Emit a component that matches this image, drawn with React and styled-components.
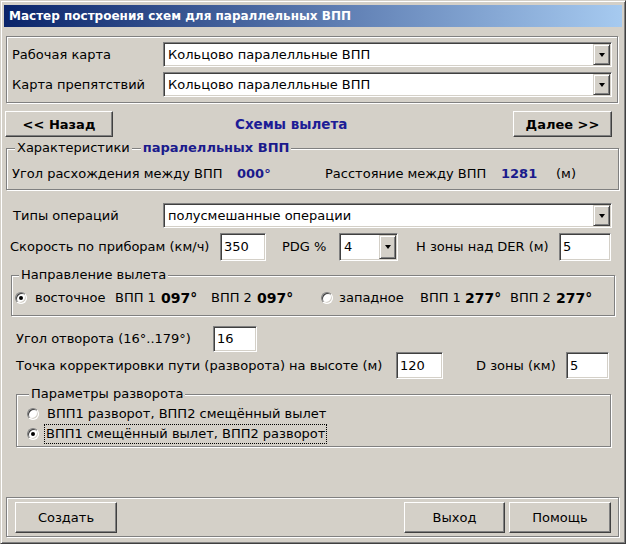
import React from 'react';
import styled, { createGlobalStyle, css } from 'styled-components';

const GlobalStyle = createGlobalStyle`
  html, body { margin: 0; padding: 0; background: #d4d0c8; }
  body { font-family: "DejaVu Sans", Verdana, sans-serif; font-size: 13px; color: #000; }
  * { box-sizing: border-box; }
`;

const Window = styled.div`
  width: 626px;
  height: 544px;
  display: flex;
  flex-direction: column;
  background: #d4d0c8;
  border: 1px solid;
  border-color: #d4d0c8 #404040 #404040 #d4d0c8;
  box-shadow: inset 1px 1px 0 #fff, inset -1px -1px 0 #808080;
  padding: 4px 3px 2px 3px;
`;

const TitleBar = styled.div`
  height: 22px;
  flex: none;
  display: flex;
  align-items: center;
  padding-left: 5px;
  background: linear-gradient(to right, #0a246a, #a6caf0);
  color: #fff;
  font-weight: bold;
  font-size: 12px;
  white-space: nowrap;
`;

const Body = styled.div`
  flex: 1;
  display: flex;
  flex-direction: column;
  padding: 0 3px 4px 2px;
`;

const Group = styled.div`
  position: relative;
  flex: none;
  border: 1px solid #808080;
  box-shadow: inset 1px 1px 0 #fff, 1px 1px 0 #fff;
  margin: ${p => p.$m || '0'};
  padding: ${p => p.$p || '0'};
  display: flex;
  flex-direction: column;
  gap: ${p => p.$gap || 0}px;
`;

const Legend = styled.div`
  position: absolute;
  top: -9px;
  left: ${p => p.$left}px;
  display: flex;
  gap: 9px;
  line-height: 16px;
  white-space: nowrap;
`;

const LegendText = styled.span`
  background: #d4d0c8;
  padding: 0 2px;
  ${p => p.$accent && css`
    font-weight: bold;
    color: #1a1a8c;
  `}
`;

const Row = styled.div`
  display: flex;
  align-items: center;
  flex: none;
  height: ${p => p.$h || 16}px;
  margin-top: ${p => p.$mt || 0}px;
  padding-left: ${p => p.$pl || 0}px;
  padding-right: ${p => p.$pr || 0}px;
  line-height: 16px;
  white-space: nowrap;
`;

const Cell = styled.span`
  flex: none;
  min-width: ${p => (p.$w ? `${p.$w}px` : '0')};
  padding-left: ${p => p.$pl || 0}px;
  white-space: nowrap;
  ${p => p.$bold && css`font-weight: bold;`}
  ${p => p.$blue && css`color: #1a1a8c;`}
  ${p => p.$size && css`font-size: ${p.$size}px;`}
`;

const Sunken = css`
  background: #fff;
  border: 1px solid;
  border-color: #808080 #fff #fff #808080;
  box-shadow: inset 1px 1px 0 #404040, inset -1px -1px 0 #d4d0c8;
`;

const ComboBox = styled.div`
  ${Sunken};
  display: flex;
  align-items: stretch;
  flex: ${p => (p.$w ? 'none' : '1')};
  width: ${p => (p.$w ? `${p.$w}px` : 'auto')};
  height: ${p => p.$h || 25}px;
  padding: 1px;
`;

const ComboText = styled.span`
  flex: 1;
  display: flex;
  align-items: center;
  padding-left: 3px;
  overflow: hidden;
  white-space: nowrap;
`;

const DropButton = styled.span`
  flex: none;
  width: 17px;
  background: #d4d0c8;
  border: 1px solid;
  border-color: #d4d0c8 #404040 #404040 #d4d0c8;
  box-shadow: inset 1px 1px 0 #fff, inset -1px -1px 0 #808080;
  display: flex;
  align-items: center;
  justify-content: center;
  &::after {
    content: '';
    border-left: 3.5px solid transparent;
    border-right: 3.5px solid transparent;
    border-top: 4px solid #000;
  }
`;

const TextBox = styled.span`
  ${Sunken};
  flex: none;
  display: flex;
  align-items: center;
  width: ${p => p.$w}px;
  height: ${p => p.$h || 28}px;
  padding-left: 3px;
`;

const RadioDot = styled.span`
  position: relative;
  flex: none;
  width: 12px;
  height: 12px;
  border-radius: 50%;
  background: #fff;
  border: 1px solid;
  border-color: #808080 #fff #fff #808080;
  box-shadow: inset 1px 1px 0 #404040, inset -1px -1px 0 #d4d0c8;
  ${p => p.$checked && css`
    &::after {
      content: '';
      position: absolute;
      left: 3px;
      top: 3px;
      width: 4px;
      height: 4px;
      border-radius: 50%;
      background: #000;
    }
  `}
`;

const RadioOption = styled.span`
  flex: none;
  display: flex;
  align-items: center;
  gap: ${p => p.$gap || 8}px;
  width: ${p => (p.$w ? `${p.$w}px` : 'auto')};
`;

const RadioLabel = styled.span`
  padding: 0 1px;
  line-height: 18px;
  ${p => p.$focus && css`outline: 1px dotted #000; outline-offset: 0;`}
`;

const Button = styled.button`
  flex: none;
  width: ${p => p.$w}px;
  height: ${p => p.$h}px;
  margin-left: ${p => p.$ml || '0'};
  padding: 0;
  font: inherit;
  font-weight: ${p => (p.$bold ? 'bold' : 'normal')};
  color: #000;
  background: #d4d0c8;
  border: 1px solid;
  border-color: #fff #404040 #404040 #fff;
  box-shadow: inset -1px -1px 0 #808080, inset 1px 1px 0 #d4d0c8;
`;

const NavRow = styled.div`
  display: flex;
  align-items: center;
  height: 26px;
  margin: 8px 0 0 -1px;
  padding-right: 7px;
`;

const Heading = styled.span`
  margin-left: 122px;
  font-weight: bold;
  font-size: 13.5px;
  color: #1c1c96;
`;

const BottomPanel = styled.div`
  margin-top: auto;
  display: flex;
  gap: 4px;
  border: 1px solid #808080;
  box-shadow: inset 1px 1px 0 #fff, 1px 1px 0 #fff;
  padding: 4px 7px 3px 8px;
`;

const Combo = ({ children, w, h }) => (
  <ComboBox $w={w} $h={h}>
    <ComboText>{children}</ComboText>
    <DropButton />
  </ComboBox>
);

export default function App() {
  return (
    <>
      <GlobalStyle />
      <Window>
        <TitleBar>Мастер построения схем для параллельных ВПП</TitleBar>
        <Body>
          <Group $m="9px 1px 0 0" $p="5px" $gap={5}>
            <Row $h={25}>
              <Cell $w={151}>Рабочая карта</Cell>
              <Combo>Кольцово паралелльные ВПП</Combo>
            </Row>
            <Row $h={25}>
              <Cell $w={151}>Карта препятствий</Cell>
              <Combo>Кольцово паралелльные ВПП</Combo>
            </Row>
          </Group>

          <NavRow>
            <Button $w={108} $h={26} $bold>&lt;&lt; Назад</Button>
            <Heading>Схемы вылета</Heading>
            <Button $w={99} $h={26} $bold $ml="auto">Далее &gt;&gt;</Button>
          </NavRow>

          <Group $m="11px 0 0 0" $p="17px 5px 7px 5px">
            <Legend $left={8}>
              <LegendText>Характеристики</LegendText>
              <LegendText $accent>паралелльных ВПП</LegendText>
            </Legend>
            <Row>
              <Cell $w={225}>Угол расхождения между ВПП</Cell>
              <Cell $w={88} $bold $blue>000°</Cell>
              <Cell $w={176}>Расстояние между ВПП</Cell>
              <Cell $w={55} $bold $blue>1281</Cell>
              <Cell>(м)</Cell>
            </Row>
          </Group>

          <Row $h={25} $mt={13} $pl={7} $pr={7}>
            <Cell $w={150}>Типы операций</Cell>
            <Combo>полусмешанные операции</Combo>
          </Row>

          <Row $h={28} $mt={5} $pl={4}>
            <Cell $w={210}>Скорость по приборам (км/ч)</Cell>
            <TextBox $w={46}>350</TextBox>
            <Cell $w={73} $pl={16}>PDG %</Cell>
            <Combo w={59} h={28}>4</Combo>
            <Cell $w={161} $pl={18}>H зоны над DER (м)</Cell>
            <TextBox $w={52}>5</TextBox>
          </Row>

          <Group $m="14px 4px 0 5px" $p="14px 3px 9px 3px">
            <Legend $left={7}>
              <LegendText>Направление вылета</LegendText>
            </Legend>
            <Row>
              <RadioOption $w={100} $gap={8}>
                <RadioDot $checked />
                <span>восточное</span>
              </RadioOption>
              <Cell $w={46}>ВПП 1</Cell>
              <Cell $w={50} $bold $size={14}>097°</Cell>
              <Cell $w={46}>ВПП 2</Cell>
              <Cell $w={64} $bold $size={14}>097°</Cell>
              <RadioOption $w={99} $gap={6}>
                <RadioDot />
                <span>западное</span>
              </RadioOption>
              <Cell $w={45}>ВПП 1</Cell>
              <Cell $w={45} $bold $size={14}>277°</Cell>
              <Cell $w={46}>ВПП 2</Cell>
              <Cell $bold $size={14}>277°</Cell>
            </Row>
          </Group>

          <Row $h={26} $mt={10} $pl={10}>
            <Cell $w={197}>Угол отворота (16°..179°)</Cell>
            <TextBox $w={44} $h={26}>16</TextBox>
          </Row>

          <Row $h={27} $pl={10}>
            <Cell $w={380}>Точка корректировки пути (разворота) на высоте (м)</Cell>
            <TextBox $w={47} $h={27}>120</TextBox>
            <Cell $w={123} $pl={33}>D зоны (км)</Cell>
            <TextBox $w={43} $h={27}>5</TextBox>
          </Row>

          <Group $m="15px 8px 0 10px" $p="9px 0 1px 10px">
            <Legend $left={12}>
              <LegendText>Параметры разворота</LegendText>
            </Legend>
            <Row $h={19}>
              <RadioOption $gap={7}>
                <RadioDot />
                <RadioLabel>ВПП1 разворот, ВПП2 смещённый вылет</RadioLabel>
              </RadioOption>
            </Row>
            <Row $h={22}>
              <RadioOption $gap={6}>
                <RadioDot $checked />
                <RadioLabel $focus>ВПП1 смещённый вылет, ВПП2 разворот</RadioLabel>
              </RadioOption>
            </Row>
          </Group>

          <BottomPanel>
            <Button $w={102} $h={31}>Создать</Button>
            <Button $w={101} $h={31} $ml="auto">Выход</Button>
            <Button $w={102} $h={31}>Помощь</Button>
          </BottomPanel>
        </Body>
      </Window>
    </>
  );
}
